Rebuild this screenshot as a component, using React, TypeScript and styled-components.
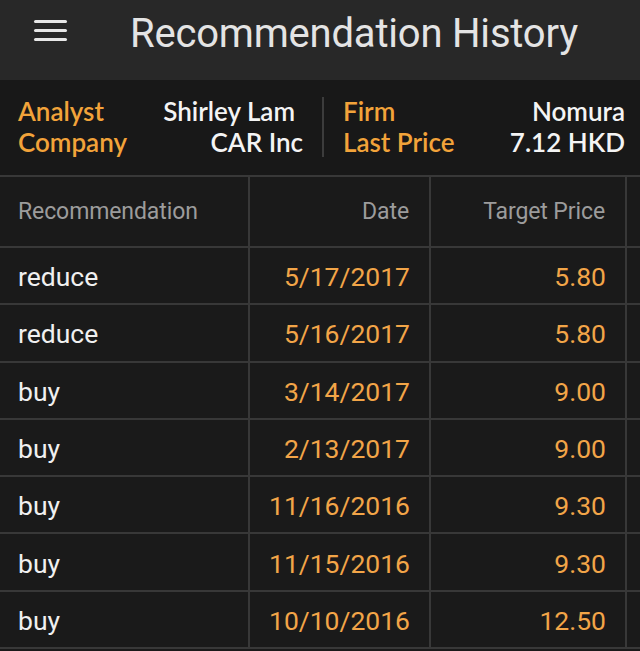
import React from "react";
import styled, { createGlobalStyle } from "styled-components";

const Global = createGlobalStyle`
  html, body { margin: 0; padding: 0; background: #1a1a1a; }
  body { width: 640px; height: 651px; overflow: hidden; }
`;

const Page = styled.div`
  width: 640px;
  height: 651px;
  overflow: hidden;
  background: #1a1a1a;
  display: flex;
  flex-direction: column;
`;

const TopBar = styled.header`
  height: 80px;
  flex: 0 0 80px;
  background: #282828;
  display: flex;
  align-items: center;
  box-sizing: border-box;
  padding-left: 34px;
`;

const MenuButton = styled.div`
  width: 33px;
  display: flex;
  flex-direction: column;
  gap: 6px;
  margin-top: -20px;
  margin-right: 63px;
`;

const MenuLine = styled.span`
  display: block;
  height: 3px;
  border-radius: 1.5px;
  background: #e8e8e8;
`;

const Title = styled.h1`
  margin: 0;
  margin-top: -14px;
  font-family: Roboto, "DejaVu Sans", sans-serif;
  font-weight: 400;
  font-size: 40px;
  color: #e4e4e4;
  letter-spacing: -0.2px;
`;

const InfoBar = styled.section`
  height: 97px;
  flex: 0 0 97px;
  box-sizing: border-box;
  background: #181818;
  border-bottom: 2px solid #383838;
  display: grid;
  grid-template-columns: 322px 2px 1fr;
  align-items: center;
`;

const InfoHalf = styled.div<{ $left?: number; $right?: number }>`
  display: grid;
  grid-template-columns: auto 1fr;
  row-gap: 1px;
  padding-left: ${(p) => p.$left ?? 0}px;
  padding-right: ${(p) => p.$right ?? 0}px;
  margin-top: -2px;
  font-family: Lato, "Open Sans", sans-serif;
  font-weight: 600;
  font-size: 26px;
  line-height: 30px;
`;

const Label = styled.span`
  color: #f2a33a;
`;

const Value = styled.span<{ $shift?: number }>`
  color: #f4f4f4;
  text-align: right;
  margin-right: ${(p) => p.$shift ?? 0}px;
`;

const Divider = styled.div`
  width: 2px;
  height: 60px;
  margin-top: -2px;
  background: #3c3c3c;
`;

const TableWrap = styled.div`
  flex: 1;
  overflow: hidden;
`;

const Table = styled.table`
  border-collapse: collapse;
  table-layout: fixed;
  width: 700px;
  font-family: Roboto, "DejaVu Sans", sans-serif;
`;

const HeadCell = styled.th<{ $align?: string }>`
  height: 70px;
  box-sizing: border-box;
  border: 2px solid #383838;
  border-top: none;
  padding: 0 20px 0 18px;
  font-weight: 400;
  font-size: 23px;
  letter-spacing: -0.1px;
  color: #9c9c9c;
  text-align: ${(p) => p.$align ?? "left"};
  &:first-child { border-left: none; }
`;

const Cell = styled.td<{ $align?: string; $tone?: "white" | "orange" }>`
  height: 57.3px;
  box-sizing: border-box;
  border: 2px solid #383838;
  padding: 2px 19px 0 18px;
  font-size: 26.5px;
  color: ${(p) => (p.$tone === "orange" ? "#f2a548" : "#f0f0f0")};
  text-align: ${(p) => p.$align ?? "left"};
  &:first-child { border-left: none; }
`;

const rows = [
  ["reduce", "5/17/2017", "5.80"],
  ["reduce", "5/16/2017", "5.80"],
  ["buy", "3/14/2017", "9.00"],
  ["buy", "2/13/2017", "9.00"],
  ["buy", "11/16/2016", "9.30"],
  ["buy", "11/15/2016", "9.30"],
  ["buy", "10/10/2016", "12.50"],
];

export default function App() {
  return (
    <Page>
      <Global />
      <TopBar>
        <MenuButton>
          <MenuLine />
          <MenuLine />
          <MenuLine />
        </MenuButton>
        <Title>Recommendation History</Title>
      </TopBar>
      <InfoBar>
        <InfoHalf $left={18} $right={19}>
          <Label>Analyst</Label>
          <Value $shift={8}>Shirley Lam</Value>
          <Label>Company</Label>
          <Value>CAR Inc</Value>
        </InfoHalf>
        <Divider />
        <InfoHalf $left={19} $right={15}>
          <Label>Firm</Label>
          <Value>Nomura</Value>
          <Label>Last Price</Label>
          <Value>7.12 HKD</Value>
        </InfoHalf>
      </InfoBar>
      <TableWrap>
        <Table>
          <colgroup>
            <col style={{ width: 249 }} />
            <col style={{ width: 181 }} />
            <col style={{ width: 196 }} />
            <col />
          </colgroup>
          <thead>
            <tr>
              <HeadCell>Recommendation</HeadCell>
              <HeadCell $align="right">Date</HeadCell>
              <HeadCell $align="right">Target Price</HeadCell>
              <HeadCell />
            </tr>
          </thead>
          <tbody>
            {rows.map((r, i) => (
              <tr key={i}>
                <Cell>{r[0]}</Cell>
                <Cell $align="right" $tone="orange">{r[1]}</Cell>
                <Cell $align="right" $tone="orange">{r[2]}</Cell>
                <Cell />
              </tr>
            ))}
          </tbody>
        </Table>
      </TableWrap>
    </Page>
  );
}
